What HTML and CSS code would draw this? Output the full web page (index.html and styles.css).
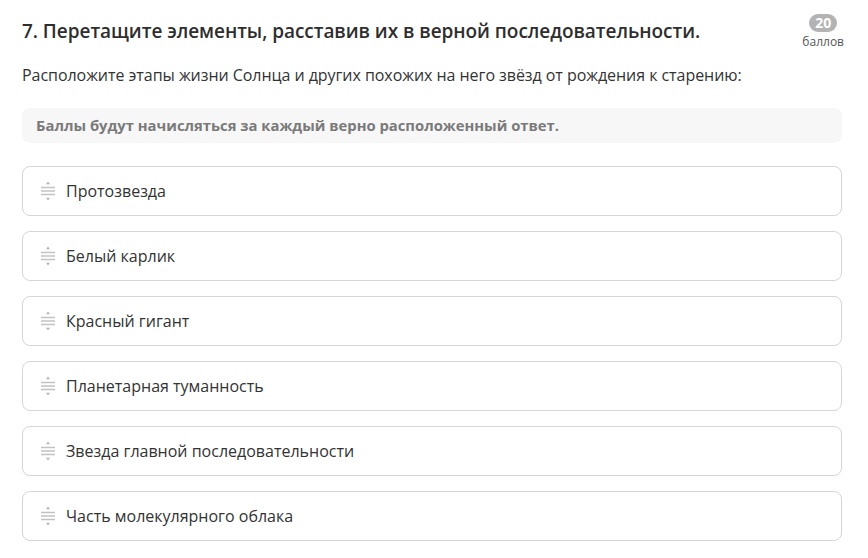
FILE: index.html
```html
<!DOCTYPE html>
<html lang="ru">
<head>
<meta charset="utf-8">
<link rel="stylesheet" href="styles.css">
</head>
<body>
<div class="task">
  <div class="head">
    <h1 class="title">7. Перетащите элементы, расставив их в верной последовательности.</h1>
    <div class="score">
      <span class="badge">20</span>
      <span class="unit">баллов</span>
    </div>
  </div>
  <p class="desc">Расположите этапы жизни Солнца и других похожих на него звёзд от рождения к старению:</p>
  <div class="note">Баллы будут начисляться за каждый верно расположенный ответ.</div>
  <ul class="list">
    <li class="item"><svg class="grip" viewBox="0 0 16 20" width="16" height="20"><path d="M8 0.5 L10 3.2 H6 Z M8 19.5 L10 16.8 H6 Z" fill="#b5b5b5"/><path d="M1 6.5 H15 M1 10 H15 M1 13.5 H15" stroke="#c2c2c2" stroke-width="1.4"/></svg><span>Протозвезда</span></li>
    <li class="item"><svg class="grip" viewBox="0 0 16 20" width="16" height="20"><path d="M8 0.5 L10 3.2 H6 Z M8 19.5 L10 16.8 H6 Z" fill="#b5b5b5"/><path d="M1 6.5 H15 M1 10 H15 M1 13.5 H15" stroke="#c2c2c2" stroke-width="1.4"/></svg><span>Белый карлик</span></li>
    <li class="item"><svg class="grip" viewBox="0 0 16 20" width="16" height="20"><path d="M8 0.5 L10 3.2 H6 Z M8 19.5 L10 16.8 H6 Z" fill="#b5b5b5"/><path d="M1 6.5 H15 M1 10 H15 M1 13.5 H15" stroke="#c2c2c2" stroke-width="1.4"/></svg><span>Красный гигант</span></li>
    <li class="item"><svg class="grip" viewBox="0 0 16 20" width="16" height="20"><path d="M8 0.5 L10 3.2 H6 Z M8 19.5 L10 16.8 H6 Z" fill="#b5b5b5"/><path d="M1 6.5 H15 M1 10 H15 M1 13.5 H15" stroke="#c2c2c2" stroke-width="1.4"/></svg><span>Планетарная туманность</span></li>
    <li class="item"><svg class="grip" viewBox="0 0 16 20" width="16" height="20"><path d="M8 0.5 L10 3.2 H6 Z M8 19.5 L10 16.8 H6 Z" fill="#b5b5b5"/><path d="M1 6.5 H15 M1 10 H15 M1 13.5 H15" stroke="#c2c2c2" stroke-width="1.4"/></svg><span>Звезда главной последовательности</span></li>
    <li class="item"><svg class="grip" viewBox="0 0 16 20" width="16" height="20"><path d="M8 0.5 L10 3.2 H6 Z M8 19.5 L10 16.8 H6 Z" fill="#b5b5b5"/><path d="M1 6.5 H15 M1 10 H15 M1 13.5 H15" stroke="#c2c2c2" stroke-width="1.4"/></svg><span>Часть молекулярного облака</span></li>
  </ul>
</div>
</body>
</html>
```
FILE: styles.css
```css
* { box-sizing: border-box; }
html, body { margin: 0; padding: 0; background: #fff; }
body { font-family: "Open Sans", "Noto Sans", sans-serif; color: #333; }
.task { padding: 12px 26px 0 22px; }
.head { display: flex; justify-content: space-between; align-items: flex-start; }
.title { margin: 6px 0 0; font-size: 19px; font-weight: 600; color: #2e2e2e; line-height: 26px; letter-spacing: -0.05px; }
.score { display: flex; flex-direction: column; align-items: center; margin-top: 2px; margin-right: -2px; }
.badge { background: #b3b3b3; color: #fff; font-weight: 700; font-size: 14px; line-height: 18px; height: 18px; padding: 0 6px; border-radius: 9px; min-width: 27px; text-align: center; }
.unit { font-size: 12px; color: #555; line-height: 16px; margin-top: 2px; }
.desc { margin: 14px 0 0; font-size: 16px; line-height: 22px; color: #333; letter-spacing: -0.05px; }
.note { margin-top: 22px; background: #f7f7f7; border-radius: 8px; padding: 6px 14px; font-size: 14.8px; font-weight: 700; color: #7a7a7a; line-height: 23px; }
.list { list-style: none; margin: 23px 0 0; padding: 0; display: flex; flex-direction: column; gap: 15px; }
.item { display: flex; align-items: center; height: 50px; border: 1px solid #d6d6d6; border-radius: 8px; padding-left: 17px; font-size: 16px; color: #333; }
.grip { flex: none; margin-right: 10px; }
```
